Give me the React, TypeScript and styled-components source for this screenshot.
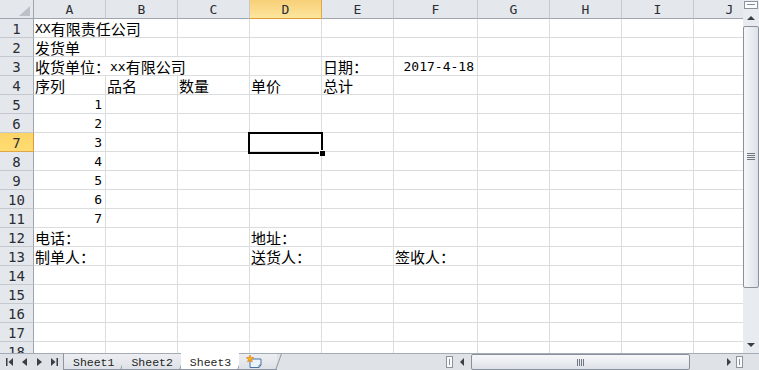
import React from "react";
import styled, { createGlobalStyle, css } from "styled-components";

const GlobalStyle = createGlobalStyle`
  html, body { margin: 0; padding: 0; background: #fff; overflow: hidden; }
  #root { width: 759px; height: 370px; }
`;

const GRID = "#dadcdd";
const HEADER_BG = "#e4e7ec";
const HEADER_LINE = "#c5c9cf";
const HEADER_EDGE = "#9ea5ae";
const BAR_BG = "#dfe3e8";
const SCROLL_EDGE = "#8d949d";

const Window = styled.div`
  width: 759px;
  height: 370px;
  display: flex;
  flex-direction: column;
  overflow: hidden;
  background: #fff;
`;

const Main = styled.div`
  display: flex;
  height: 353px;
`;

const SheetView = styled.div`
  flex: 1;
  overflow: hidden;
`;

const Grid = styled.div`
  display: grid;
  grid-template-columns: 34px 72px 72px 72px 72px 72px 84px 72px 72px 72px 72px;
  grid-auto-rows: 19px;
  width: max-content;
`;

const Corner = styled.div`
  position: relative;
  background: ${HEADER_BG};
  border-right: 1px solid ${HEADER_EDGE};
  border-bottom: 1px solid ${HEADER_EDGE};
  box-sizing: border-box;
  &::after {
    content: "";
    position: absolute;
    right: 3px;
    bottom: 2px;
    width: 0;
    height: 0;
    border-left: 11px solid transparent;
    border-bottom: 10px solid #bcc1c8;
  }
`;

const HeaderText = css`
  font-family: "DejaVu Sans Mono", "Liberation Mono", monospace;
  color: #2a2d33;
  box-sizing: border-box;
  display: flex;
  align-items: center;
  justify-content: center;
`;

const ColHeader = styled.div<{ $active?: boolean }>`
  ${HeaderText};
  font-size: 13px;
  padding-top: 1px;
  background: ${(p) => (p.$active ? "linear-gradient(to bottom, #f7cf78, #fde69c)" : HEADER_BG)};
  border-right: 1px solid ${(p) => (p.$active ? "#e2a745" : HEADER_LINE)};
  border-bottom: 1px solid ${(p) => (p.$active ? "#e09a35" : HEADER_EDGE)};
`;

const RowHeader = styled.div<{ $active?: boolean }>`
  ${HeaderText};
  font-size: 14px;
  padding-top: 2px;
  background: ${(p) => (p.$active ? "linear-gradient(to bottom, #fbd466, #ffdc73)" : HEADER_BG)};
  border-right: 1px solid ${(p) => (p.$active ? "#e09a35" : HEADER_EDGE)};
  border-bottom: 1px solid ${(p) => (p.$active ? "#e2a745" : HEADER_LINE)};
`;

const Cell = styled.div<{ $span: number; $align: "left" | "right" }>`
  grid-column: span ${(p) => p.$span};
  position: relative;
  box-sizing: border-box;
  display: flex;
  align-items: flex-end;
  justify-content: ${(p) => (p.$align === "right" ? "flex-end" : "flex-start")};
  padding: 0 3px 0 1px;
  border-right: 1px solid ${GRID};
  border-bottom: 1px solid ${GRID};
  white-space: nowrap;
  color: #000;
  line-height: 17px;
`;

const Han = styled.span`
  font-family: "Noto Sans CJK SC", sans-serif;
  font-size: 15px;
`;

const Latin = styled.span`
  font-family: "DejaVu Sans Mono", monospace;
  font-size: 13px;
`;

const Selection = styled.div`
  position: absolute;
  left: -2px;
  top: -1px;
  width: 75px;
  height: 22px;
  box-sizing: border-box;
  border: 2px solid #000;
  z-index: 2;
  &::after {
    content: "";
    position: absolute;
    right: -4px;
    bottom: -4px;
    width: 5px;
    height: 5px;
    background: #000;
    border-left: 1px solid #fff;
    border-top: 1px solid #fff;
  }
`;

/* ---------- vertical scrollbar ---------- */
const VScroll = styled.div`
  width: 16px;
  display: flex;
  flex-direction: column;
  background: #e8ebef;
`;

const VSplit = styled.div`
  height: 6px;
  margin: 1px 1px 1px 1px;
  border: 1px solid ${SCROLL_EDGE};
  background: #fbfcfd;
  position: relative;
  &::after {
    content: "";
    position: absolute;
    left: 2px;
    right: 2px;
    top: 2px;
    height: 1px;
    background: #8a9099;
  }
`;

const ArrowBtn = styled.div<{ $size: number; $vertical?: boolean }>`
  display: flex;
  align-items: center;
  justify-content: center;
  flex: 0 0 ${(p) => p.$size}px;
`;

const VTrack = styled.div`
  flex: 1;
  display: flex;
  flex-direction: column;
`;

const VThumb = styled.div`
  height: 262px;
  box-sizing: border-box;
  border: 1px solid #8a919a;
  border-radius: 2px;
  background: linear-gradient(to right, #f6f7f9, #dde1e8);
  display: flex;
  align-items: center;
  justify-content: center;
`;

/* ---------- bottom bar ---------- */
const BottomBar = styled.div`
  height: 16px;
  display: flex;
  background: ${BAR_BG};
  border-top: 1px solid #a3abb5;
`;

const NavButtons = styled.div`
  width: 63px;
  display: flex;
  padding-left: 2px;
  box-sizing: border-box;
`;

const NavButton = styled.div`
  width: 15px;
  display: flex;
  align-items: center;
  justify-content: center;
`;

const TabStrip = styled.div`
  display: flex;
  border-left: 1px solid #8d96a1;
  margin-top: -1px;
`;

const Tab = styled.div<{ $active?: boolean }>`
  position: relative;
  display: flex;
  align-items: center;
  padding: 1px 8px 0 9px;
  font-family: "Liberation Mono", monospace;
  font-size: 11.5px;
  color: #1e1f22;
  background: ${(p) => (p.$active ? "#fff" : "linear-gradient(to bottom, #eceef2, #dde1e7)")};
  border-top: 1px solid ${(p) => (p.$active ? "#fff" : "#a3abb5")};
  border-bottom: 1px solid #8d96a1;
  &::after {
    content: "";
    position: absolute;
    right: -2px;
    top: 0;
    bottom: -1px;
    width: 1px;
    background: #8d96a1;
    transform: skewX(-20deg);
  }
`;

const NewTab = styled(Tab)`
  width: 38px;
  box-sizing: border-box;
  padding-left: 7px;
`;

const Spacer = styled.div`
  flex: 1;
`;

const HScroll = styled.div`
  width: 297px;
  display: flex;
  align-items: stretch;
`;

const HSplit = styled.div`
  flex: 0 0 7px;
  box-sizing: border-box;
  margin: 2px 0 2px;
  border: 1px solid ${SCROLL_EDGE};
  background: #fbfcfd;
  position: relative;
  &::after {
    content: "";
    position: absolute;
    top: 2px;
    bottom: 2px;
    left: 2px;
    width: 1px;
    background: #8a9099;
  }
`;

const HTrack = styled.div`
  flex: 1;
  display: flex;
  padding: 0;
`;

const HThumb = styled.div`
  width: 219px;
  box-sizing: border-box;
  margin: 0 0 0 0;
  border: 1px solid #8a919a;
  border-radius: 2px;
  background: linear-gradient(to bottom, #f6f7f9, #dde1e8);
  display: flex;
  align-items: center;
  justify-content: center;
`;

const CornerBox = styled.div`
  width: 16px;
  background: ${BAR_BG};
`;

/* ---------- icons ---------- */
const Tri = ({ dir, w = 5, h = 8, color = "#3a3e45" }: { dir: "l" | "r" | "u" | "d"; w?: number; h?: number; color?: string }) => {
  const pts =
    dir === "l"
      ? `${w},0 ${w},${h} 0,${h / 2}`
      : dir === "r"
      ? `0,0 0,${h} ${w},${h / 2}`
      : dir === "u"
      ? `0,${h} ${w},${h} ${w / 2},0`
      : `0,0 ${w},0 ${w / 2},${h}`;
  return (
    <svg width={w} height={h} viewBox={`0 0 ${w} ${h}`}>
      <polygon points={pts} fill={color} />
    </svg>
  );
};

const FirstIcon = () => (
  <svg width="7" height="8" viewBox="0 0 7 8">
    <rect x="0" y="0" width="1.5" height="8" fill="#3a3e45" />
    <polygon points="7,0 7,8 2.5,4" fill="#3a3e45" />
  </svg>
);

const LastIcon = () => (
  <svg width="7" height="8" viewBox="0 0 7 8">
    <polygon points="0,0 0,8 4.5,4" fill="#3a3e45" />
    <rect x="5.5" y="0" width="1.5" height="8" fill="#3a3e45" />
  </svg>
);

const Grip = ({ vertical }: { vertical?: boolean }) =>
  vertical ? (
    <svg width="8" height="8" viewBox="0 0 8 8">
      {[0.5, 2.5, 4.5, 6.5].map((y) => (
        <line key={y} x1="0" x2="8" y1={y} y2={y} stroke="#70767f" strokeWidth="1" />
      ))}
    </svg>
  ) : (
    <svg width="8" height="7" viewBox="0 0 8 7">
      {[0.5, 2.5, 4.5, 6.5].map((x) => (
        <line key={x} y1="0" y2="7" x1={x} x2={x} stroke="#70767f" strokeWidth="1" />
      ))}
    </svg>
  );

const NewSheetIcon = () => (
  <svg width="18" height="14" viewBox="0 0 18 14">
    <path d="M4 4 H15 V10 L13 12.5 H4 Z" fill="#eaf2fb" stroke="#4f74a0" strokeWidth="1" />
    <path d="M13 12.5 V10 H15" fill="none" stroke="#4f74a0" strokeWidth="0.8" />
    <polygon
      points="4,0 5,2.6 7.8,2.6 5.6,4.3 6.4,7 4,5.4 1.6,7 2.4,4.3 0.2,2.6 3,2.6"
      fill="#f6b417"
      stroke="#e07b10"
      strokeWidth="0.6"
    />
  </svg>
);

/* ---------- data ---------- */
type Align = "left" | "right";
type CellData = { text: string; span?: number; align?: Align };

const COLS = ["A", "B", "C", "D", "E", "F", "G", "H", "I", "J"];

const DATA: Record<number, Record<string, CellData>> = {
  1: { A: { text: "XX有限责任公司", span: 2 } },
  2: { A: { text: "发货单" } },
  3: {
    A: { text: "收货单位：xx有限公司", span: 3 },
    E: { text: "日期：" },
    F: { text: "2017-4-18", align: "right" },
  },
  4: {
    A: { text: "序列" },
    B: { text: "品名" },
    C: { text: "数量" },
    D: { text: "单价" },
    E: { text: "总计" },
  },
  5: { A: { text: "1", align: "right" } },
  6: { A: { text: "2", align: "right" } },
  7: { A: { text: "3", align: "right" } },
  8: { A: { text: "4", align: "right" } },
  9: { A: { text: "5", align: "right" } },
  10: { A: { text: "6", align: "right" } },
  11: { A: { text: "7", align: "right" } },
  12: { A: { text: "电话：" }, D: { text: "地址：" } },
  13: { A: { text: "制单人：" }, D: { text: "送货人：" }, F: { text: "签收人：" } },
};

const ROW_COUNT = 18;
const ACTIVE_ROW = 7;
const ACTIVE_COL = "D";

const renderText = (t: string) =>
  (t.match(/[\x00-\x7f]+|[^\x00-\x7f]+/g) || []).map((seg, i) =>
    /^[\x00-\x7f]/.test(seg) ? <Latin key={i}>{seg}</Latin> : <Han key={i}>{seg}</Han>
  );

const SheetRow = ({ row }: { row: number }) => {
  const cells: React.ReactNode[] = [];
  let c = 0;
  while (c < COLS.length) {
    const col = COLS[c];
    const d = DATA[row]?.[col];
    const span = d?.span ?? 1;
    const selected = row === ACTIVE_ROW && col === ACTIVE_COL;
    cells.push(
      <Cell key={col} $span={span} $align={d?.align ?? "left"}>
        {d ? renderText(d.text) : null}
        {selected && <Selection />}
      </Cell>
    );
    c += span;
  }
  return (
    <>
      <RowHeader $active={row === ACTIVE_ROW}>{row}</RowHeader>
      {cells}
    </>
  );
};

export default function App() {
  return (
    <>
      <GlobalStyle />
      <Window>
        <Main>
          <SheetView>
            <Grid>
              <Corner />
              {COLS.map((c) => (
                <ColHeader key={c} $active={c === ACTIVE_COL}>
                  {c}
                </ColHeader>
              ))}
              {Array.from({ length: ROW_COUNT }, (_, i) => (
                <SheetRow key={i} row={i + 1} />
              ))}
            </Grid>
          </SheetView>
          <VScroll>
            <VSplit />
            <ArrowBtn $size={16}>
              <Tri dir="u" w={8} h={4} />
            </ArrowBtn>
            <VTrack>
              <VThumb>
                <Grip vertical />
              </VThumb>
            </VTrack>
            <ArrowBtn $size={16}>
              <Tri dir="d" w={8} h={4} />
            </ArrowBtn>
          </VScroll>
        </Main>
        <BottomBar>
          <NavButtons>
            <NavButton>
              <FirstIcon />
            </NavButton>
            <NavButton>
              <Tri dir="l" />
            </NavButton>
            <NavButton>
              <Tri dir="r" />
            </NavButton>
            <NavButton>
              <LastIcon />
            </NavButton>
          </NavButtons>
          <TabStrip>
            <Tab>Sheet1</Tab>
            <Tab>Sheet2</Tab>
            <Tab $active>Sheet3</Tab>
            <NewTab>
              <NewSheetIcon />
            </NewTab>
          </TabStrip>
          <Spacer />
          <HScroll>
            <HSplit />
            <ArrowBtn $size={18}>
              <Tri dir="l" w={4} h={8} />
            </ArrowBtn>
            <HTrack>
              <HThumb>
                <Grip />
              </HThumb>
            </HTrack>
            <ArrowBtn $size={14}>
              <Tri dir="r" w={4} h={8} />
            </ArrowBtn>
            <HSplit />
          </HScroll>
          <CornerBox />
        </BottomBar>
      </Window>
    </>
  );
}
